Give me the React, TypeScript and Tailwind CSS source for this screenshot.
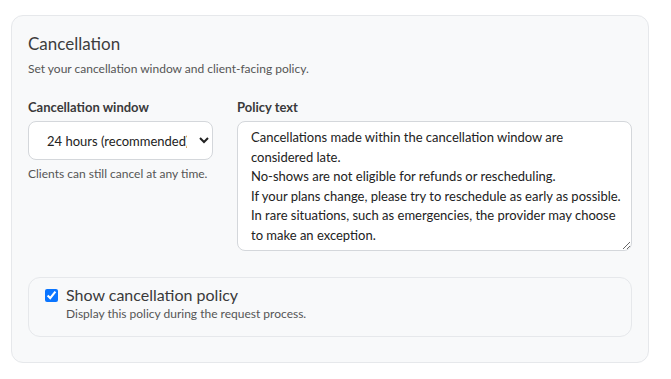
import React from "react";

const POLICY = `Cancellations made within the cancellation window are considered late.
No-shows are not eligible for refunds or rescheduling.
If your plans change, please try to reschedule as early as possible.
In rare situations, such as emergencies, the provider may choose to make an exception.`;

export default function App() {
  return (
    <div className="min-h-screen bg-white pl-[11px] pt-[15px] font-['Lato','Liberation_Sans',sans-serif] text-[#333]">
      <div className="w-[638px] rounded-xl border border-[#e6e8eb] bg-[#f8f9fa] px-4 pb-[25px] pt-4">
        <h2 className="text-[17px] leading-6 text-[#3d3d3d]">Cancellation</h2>
        <p className="mt-[5px] text-[12px] leading-4 text-[#555]">
          Set your cancellation window and client-facing policy.
        </p>

        <div className="mt-[21px] grid grid-cols-[185px_1fr] gap-6">
          <div className="flex flex-col">
            <label className="text-[13px] font-bold leading-[18px] text-[#3a3a3a]">
              Cancellation window
            </label>
            <select
              defaultValue="24"
              className="mt-[5px] h-[39px] w-[185px] rounded-lg border border-[#d4d7db] bg-white pl-[14px] pr-[9px] text-[13px] text-[#222]"
            >
              <option value="12">12 hours</option>
              <option value="24">24 hours (recommended)</option>
              <option value="48">48 hours</option>
            </select>
            <p className="mt-1.5 text-[12px] leading-4 text-[#555]">
              Clients can still cancel at any time.
            </p>
          </div>

          <div className="flex flex-col">
            <label className="text-[13px] font-bold leading-[18px] text-[#3a3a3a]">
              Policy text
            </label>
            <textarea
              defaultValue={POLICY}
              className="mt-[5px] h-[130px] w-full resize-y overflow-hidden rounded-lg border border-[#d4d7db] bg-white pb-1 pl-[13px] pr-2 pt-1.5 text-[13px] leading-[19.5px] text-[#222]"
            />
          </div>
        </div>

        <div className="mt-[26px] rounded-xl border border-[#e6e8eb] px-4 pb-[14px] pt-1.5">
          <label className="flex items-center gap-2">
            <input type="checkbox" defaultChecked className="h-[13px] w-[13px] accent-[#0a75ff]" />
            <span className="text-[16px] leading-[22px] text-[#3a3a3a]">Show cancellation policy</span>
          </label>
          <p className="ml-[21px] text-[12px] leading-4 text-[#555]">
            Display this policy during the request process.
          </p>
        </div>
      </div>
    </div>
  );
}
